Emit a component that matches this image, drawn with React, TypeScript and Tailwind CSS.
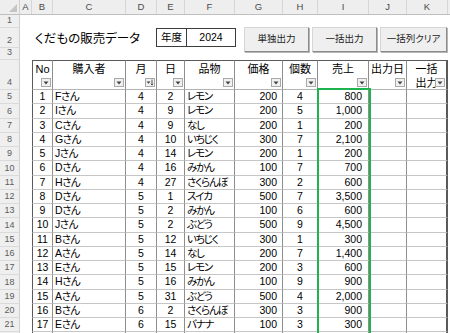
import React from "react";

type Row = { no: number; name: string; m: number; d: number; item: string; price: number; qty: number };

const rows: Row[] = [
  { no: 1, name: "Fさん", m: 4, d: 2, item: "レモン", price: 200, qty: 4 },
  { no: 2, name: "Iさん", m: 4, d: 9, item: "レモン", price: 200, qty: 5 },
  { no: 3, name: "Cさん", m: 4, d: 9, item: "なし", price: 200, qty: 1 },
  { no: 4, name: "Gさん", m: 4, d: 10, item: "いちじく", price: 300, qty: 7 },
  { no: 5, name: "Jさん", m: 4, d: 14, item: "レモン", price: 200, qty: 1 },
  { no: 6, name: "Dさん", m: 4, d: 16, item: "みかん", price: 100, qty: 7 },
  { no: 7, name: "Hさん", m: 4, d: 27, item: "さくらんぼ", price: 300, qty: 2 },
  { no: 8, name: "Dさん", m: 5, d: 1, item: "スイカ", price: 500, qty: 7 },
  { no: 9, name: "Dさん", m: 5, d: 2, item: "みかん", price: 100, qty: 6 },
  { no: 10, name: "Jさん", m: 5, d: 2, item: "ぶどう", price: 500, qty: 9 },
  { no: 11, name: "Bさん", m: 5, d: 12, item: "いちじく", price: 300, qty: 1 },
  { no: 12, name: "Aさん", m: 5, d: 14, item: "なし", price: 200, qty: 7 },
  { no: 13, name: "Eさん", m: 5, d: 15, item: "レモン", price: 200, qty: 3 },
  { no: 14, name: "Hさん", m: 5, d: 16, item: "みかん", price: 100, qty: 9 },
  { no: 15, name: "Aさん", m: 5, d: 31, item: "ぶどう", price: 500, qty: 4 },
  { no: 16, name: "Bさん", m: 6, d: 2, item: "さくらんぼ", price: 300, qty: 3 },
  { no: 17, name: "Eさん", m: 6, d: 15, item: "バナナ", price: 100, qty: 3 },
];

const letters = [
  { l: "A", w: "w-[12px]" },
  { l: "B", w: "w-[21px]" },
  { l: "C", w: "w-[73px]" },
  { l: "D", w: "w-[31px]" },
  { l: "E", w: "w-[28px]" },
  { l: "F", w: "w-[50px]" },
  { l: "G", w: "w-[48px]" },
  { l: "H", w: "w-[35px]" },
  { l: "I", w: "w-[51px]" },
  { l: "J", w: "w-[38px]" },
  { l: "K", w: "w-[41px]" },
];

const cols = [
  { head: "No", w: "w-[21px] border-l border-l-[#5a5a5a] border-r border-r-[#8e8e8e]", cell: "justify-center" },
  { head: "購入者", w: "w-[73px] border-r border-r-[#8e8e8e]", cell: "justify-start pl-[2px] tracking-[-0.5px]" },
  { head: "月", w: "w-[31px] border-r border-r-[#8e8e8e]", cell: "justify-center", sort: true },
  { head: "日", w: "w-[28px] border-r border-r-[#8e8e8e]", cell: "justify-center" },
  { head: "品物", w: "w-[50px] border-r border-r-[#8e8e8e]", cell: "justify-start pl-[2px] tracking-[-1.2px]" },
  { head: "価格", w: "w-[48px] border-r border-r-[#8e8e8e]", cell: "justify-end pr-[5px]" },
  { head: "個数", w: "w-[35px] border-r border-r-[#8e8e8e]", cell: "justify-center" },
  { head: "売上", w: "w-[51px] border-r border-r-[#8e8e8e]", cell: "justify-end pr-[6px]" },
  { head: "出力日", w: "w-[38px] border-r border-r-[#8e8e8e]", cell: "justify-center" },
  { head: "一括出力", w: "w-[41px] border-r-2 border-r-[#5a5a5a]", cell: "justify-center" },
];

function RowHead({ n, h }: { n?: number; h: string }) {
  return (
    <div
      className={`${h} flex w-[20px] shrink-0 items-end justify-center border-r border-b border-r-[#cfcfcf] border-b-[#dadada] bg-[#efefef] pb-[1px] text-[9px] leading-[11px] text-[#5c5c5c]`}
    >
      {n}
    </div>
  );
}

function Dropdown({ sort }: { sort?: boolean }) {
  return (
    <div className="absolute right-[1px] bottom-[2px] flex h-[9px] w-[10px] items-center justify-center border border-[#a9a9a9] bg-[#f1f1f1]">
      {sort ? (
        <svg width="8" height="7" viewBox="0 0 8 7">
          <path d="M0.5 2.5h4l-2 2.2z" fill="#444" />
          <path d="M6 0.5v5.5M5 4.8l1 1.3 1-1.3" stroke="#444" strokeWidth="0.9" fill="none" />
        </svg>
      ) : (
        <svg width="6" height="4" viewBox="0 0 6 4">
          <path d="M0.5 0.5h5l-2.5 3z" fill="#444" />
        </svg>
      )}
    </div>
  );
}

function Button({ label, w }: { label: string; w: string }) {
  return (
    <div
      className={`${w} flex h-[25px] shrink-0 items-center justify-center border border-[#d6d6d6] border-r-[#8c8c8c] border-b-[#8c8c8c] bg-[#efefef] text-[9.5px] text-[#1c1c1c] shadow-[1px_1px_0_#b5b5b5]`}
    >
      {label}
    </div>
  );
}

export default function App() {
  const dataRows = [
    ...rows.map((r) => [
      String(r.no),
      r.name,
      String(r.m),
      String(r.d),
      r.item,
      r.price.toLocaleString("en-US"),
      String(r.qty),
      (r.price * r.qty).toLocaleString("en-US"),
      "",
      "",
    ]),
    Array(10).fill(""),
  ];

  return (
    <div className="relative h-[333px] w-[450px] overflow-hidden bg-white text-black [font-family:'Liberation_Sans','Noto_Sans_CJK_JP',sans-serif] [font-feature-settings:'palt']">
      {/* column letters */}
      <div className="flex h-[15px] border-b border-b-[#bfbfbf] bg-[#eeeeee] text-[9.5px] text-[#4a4a4a]">
        <div className="relative w-[20px] shrink-0 border-r border-r-[#cfcfcf]">
          <svg className="absolute right-[2px] bottom-[2px]" width="8" height="8" viewBox="0 0 8 8">
            <path d="M8 0v8H0z" fill="#c4c4c4" />
          </svg>
        </div>
        {letters.map((c) => (
          <div key={c.l} className={`${c.w} flex shrink-0 items-center justify-center border-r border-r-[#d6d6d6]`}>
            {c.l}
          </div>
        ))}
        <div className="flex-1" />
      </div>

      {/* rows 1-3 */}
      <div className="flex">
        <div className="flex flex-col">
          <RowHead n={1} h="h-[13px]" />
          <RowHead n={2} h="h-[20px]" />
          <RowHead n={3} h="h-[12px]" />
        </div>
        <div className="flex flex-1 items-start pt-[12px]">
          <div className="mt-[3px] ml-[15px] w-[121px] shrink-0 text-[12.5px] leading-[18px]">くだもの販売データ</div>
          <div className="mt-[1px] flex h-[19px] w-[80px] shrink-0 border border-[#3c3c3c] text-[10.5px]">
            <div className="flex w-[30px] items-center justify-center border-r border-r-[#3c3c3c]">年度</div>
            <div className="flex flex-1 items-center justify-center">2024</div>
          </div>
          <div className="ml-[8px] flex gap-[3px]">
            <Button label="単独出力" w="w-[65px]" />
            <Button label="一括出力" w="w-[65px]" />
            <Button label="一括列クリア" w="w-[67px]" />
          </div>
        </div>
      </div>

      {/* table */}
      <div className="relative">
        <div className="flex h-[30px]">
          <RowHead n={4} h="h-[30px]" />
          <div className="w-[12px] shrink-0" />
          {cols.map((c) => (
            <div
              key={c.head}
              className={`${c.w} relative shrink-0 border-t border-b border-t-[#5a5a5a] border-b-[#b4b4b4] pt-[1px] text-center text-[11px] leading-[14px]`}
            >
              {c.head === "一括出力" ? (
                <>
                  一括
                  <br />
                  出力
                </>
              ) : (
                c.head
              )}
              <Dropdown sort={c.sort} />
            </div>
          ))}
          <div className="flex-1" />
        </div>

        {dataRows.map((vals, i) => (
          <div key={i} className="flex h-[14.25px]">
            <RowHead n={i + 5 <= 21 ? i + 5 : undefined} h="h-[14.25px]" />
            <div className="w-[12px] shrink-0" />
            {cols.map((c, j) => (
              <div
                key={j}
                className={`${c.w} ${c.cell} flex shrink-0 items-center overflow-hidden border-b border-b-[#c6c6c6] text-[10.5px] leading-[13px] whitespace-nowrap`}
              >
                {vals[j]}
              </div>
            ))}
            <div className="flex-1" />
          </div>
        ))}

        {/* selection box over column I */}
        <div className="pointer-events-none absolute top-[28px] left-[317px] h-[320px] w-[54px] border-2 border-[#1db34f]" />
      </div>
    </div>
  );
}
